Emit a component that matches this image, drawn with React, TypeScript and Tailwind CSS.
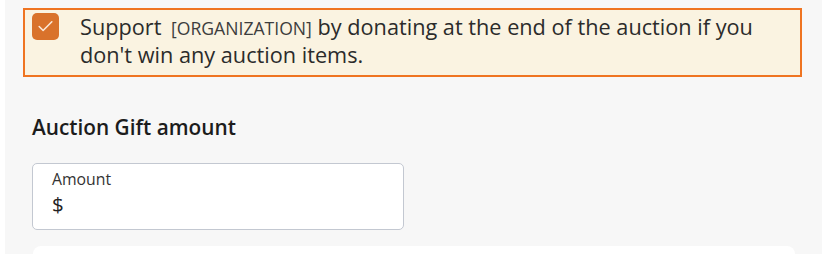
import { Check } from 'lucide-react'

const App = () => {
  return (
    <div className="bg-white pl-[5px] pr-[7px] h-[254px] overflow-hidden" style={{ fontFamily: '"Open Sans", sans-serif' }}>
      <div className="bg-[#f7f7f7] h-full pt-2">
        <div className="ml-[18px] w-[779px] border-2 border-[#ef7421] bg-[#faf3e1] flex gap-[21px] pl-[7px] pr-4 pt-[3px] pb-[6px]">
          <div className="w-[27px] h-[27px] shrink-0 rounded-[5px] bg-[#d9722b] flex items-center justify-center">
            <Check className="w-[19px] h-[19px] text-[#fbe9d8]" strokeWidth={2} />
          </div>
          <p className="text-[21.7px] leading-[28px] text-[#2b2b2b]">
            Support <span className="inline-block ml-[4px] leading-[18px] text-[17.6px] text-[#3d3d3d]">[ORGANIZATION]</span> by donating at the end of the auction if you don't win any auction items.
          </p>
        </div>

        <h2 className="ml-[27px] mt-[36px] text-[20.8px] leading-[28px] font-semibold text-[#1c1c1c]">Auction Gift amount</h2>

        <div className="ml-[27px] mt-[22px] w-[372px] h-[67px] rounded-[5px] border border-[#c3c8d1] bg-white pl-[19px] pt-[5px]">
          <div className="text-[15.8px] leading-[21px] text-[#333]">Amount</div>
          <div className="mt-[2px] text-[20.5px] leading-[24px] text-[#222]">$</div>
        </div>

        <div className="ml-[28px] mt-[16px] w-[762px] h-[40px] rounded-t-lg bg-white"></div>
      </div>
    </div>
  )
}

export default App
